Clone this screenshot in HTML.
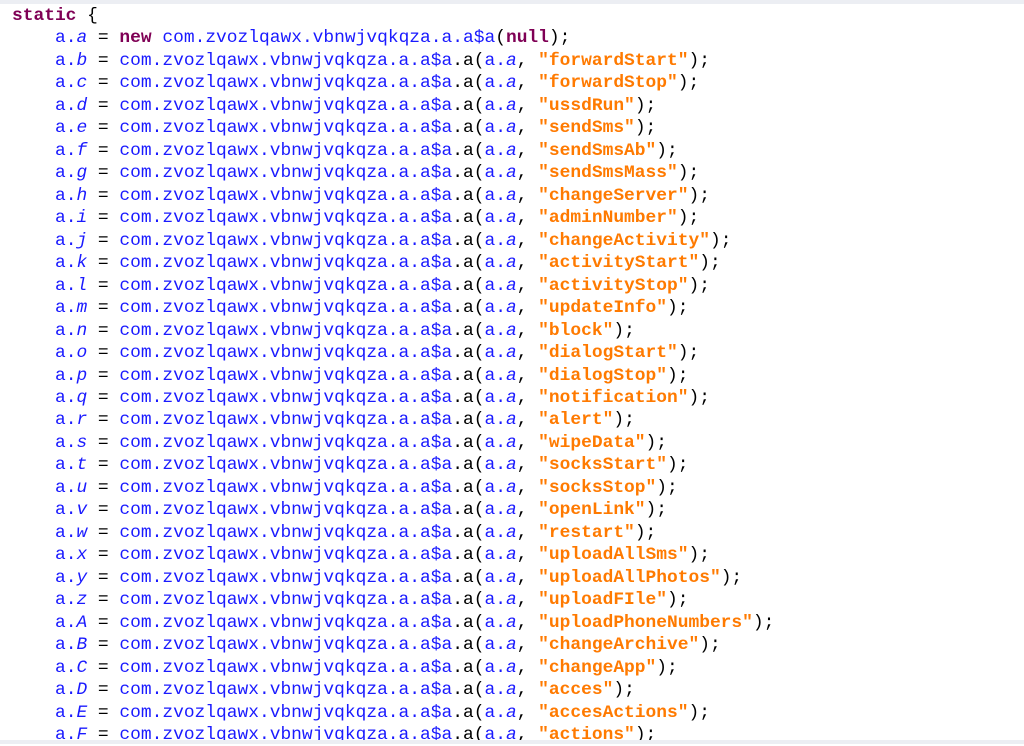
<!DOCTYPE html>
<html><head><meta charset="utf-8"><style>
html,body{margin:0;padding:0;width:1024px;height:744px;overflow:hidden;background:#fff}
.top{position:absolute;left:0;top:0;width:1024px;height:4px;background:#eceef3}
.bot{position:absolute;left:0;top:740px;width:1024px;height:4px;background:#eceef3}
pre{position:absolute;left:12px;top:5px;margin:0;font-family:"Liberation Mono",monospace;font-size:17.9px;line-height:22.47px;color:#000}
.k{color:#7f0055;font-weight:bold}
.b{color:#1a1aff}
.i{color:#1a1aff;font-style:italic}
.s{color:#ff7a00;font-weight:bold}
</style></head><body>
<div class="top"></div>
<pre><span class="k">static</span> {
    <span class="b">a.</span><span class="i">a</span> = <span class="k">new</span> <span class="b">com.zvozlqawx.vbnwjvqkqza.a.a$a</span>(<span class="k">null</span>);
<script>
var n=["b","forwardStart","c","forwardStop","d","ussdRun","e","sendSms","f","sendSmsAb","g","sendSmsMass","h","changeServer","i","adminNumber","j","changeActivity","k","activityStart","l","activityStop","m","updateInfo","n","block","o","dialogStart","p","dialogStop","q","notification","r","alert","s","wipeData","t","socksStart","u","socksStop","v","openLink","w","restart","x","uploadAllSms","y","uploadAllPhotos","z","uploadFIle","A","uploadPhoneNumbers","B","changeArchive","C","changeApp","D","acces","E","accesActions","F","actions"];
var h="";
for(var j=0;j<n.length;j+=2){h+='    <span class="b">a.</span><span class="i">'+n[j]+'</span> = <span class="b">com.zvozlqawx.vbnwjvqkqza.a.a$a</span>.a(<span class="b">a.</span><span class="i">a</span>, <span class="s">"'+n[j+1]+'"</span>);\n';}
document.write(h);
</script></pre>
<div class="bot"></div>
</body></html>
